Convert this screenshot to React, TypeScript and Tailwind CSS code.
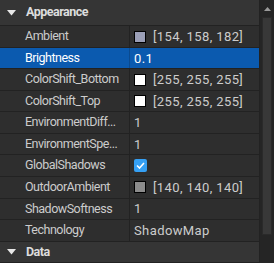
import React from "react";

type Prop = {
  name: string;
  value: string;
  swatch?: string;
  check?: boolean;
  selected?: boolean;
};

const props: Prop[] = [
  { name: "Ambient", value: "[154, 158, 182]", swatch: "#9a9eb6" },
  { name: "Brightness", value: "0.1", selected: true },
  { name: "ColorShift_Bottom", value: "[255, 255, 255]", swatch: "#ffffff" },
  { name: "ColorShift_Top", value: "[255, 255, 255]", swatch: "#ffffff" },
  { name: "EnvironmentDiff...", value: "1" },
  { name: "EnvironmentSpe...", value: "1" },
  { name: "GlobalShadows", value: "", check: true },
  { name: "OutdoorAmbient", value: "[140, 140, 140]", swatch: "#8c8c8c" },
  { name: "ShadowSoftness", value: "1" },
  { name: "Technology", value: "ShadowMap" },
];

const Caret = () => (
  <svg width="9" height="6" viewBox="0 0 9 6" className="shrink-0">
    <path d="M0 0 H9 L4.5 5.5 Z" fill="#e8e8e8" />
  </svg>
);

const Row = ({ p }: { p: Prop }) => (
  <div
    className={`flex h-[22px] border-b border-[#222222] ${
      p.selected ? "bg-[#0b5aaf]" : "bg-[#2e2e2e]"
    }`}
  >
    <div
      className={`w-[130px] shrink-0 flex items-center pl-[25px] whitespace-nowrap overflow-hidden border-r text-[12.5px] tracking-[-0.5px] ${
        p.selected ? "border-[#0a4a8f] text-white" : "border-[#222222] text-[#cccccc]"
      }`}
    >
      {p.name}
    </div>
    <div
      className={`flex-1 flex items-center pl-[4px] gap-[7px] text-[13px] tracking-[0.4px] ${
        p.selected ? "text-white" : "text-[#cccccc]"
      }`}
    >
      {p.swatch && (
        <span
          className="w-[12px] h-[12px] border border-black shrink-0"
          style={{ background: p.swatch }}
        />
      )}
      {p.check ? (
        <span className="w-[13px] h-[13px] rounded-[2px] bg-[#35a0f4] flex items-center justify-center">
          <svg width="9" height="7" viewBox="0 0 9 7">
            <path d="M1 3.5 L3.5 6 L8 1" stroke="#fff" strokeWidth="1.6" fill="none" />
          </svg>
        </span>
      ) : (
        <span>{p.value}</span>
      )}
    </div>
  </div>
);

const Header = ({ title, h }: { title: string; h: string }) => (
  <div className={`flex items-center gap-[10px] pl-[7px] bg-[#353535] border-b border-[#222222] ${h}`}>
    <Caret />
    <span className="font-bold text-[#dddddd] text-[12.5px] tracking-[-0.5px]">{title}</span>
  </div>
);

export default function App() {
  return (
    <div
      className="w-[274px] h-[263px] flex overflow-hidden bg-[#2e2e2e] leading-none"
      style={{ fontFamily: "Roboto, 'Liberation Sans', sans-serif" }}
    >
      <div className="w-[259px] flex flex-col">
        <Header title="Appearance" h="h-[27px]" />
        {props.map((p) => (
          <Row key={p.name} p={p} />
        ))}
        <Header title="Data" h="h-[22px]" />
      </div>
      <div className="w-[15px] bg-[#252525] flex flex-col border-l border-[#222222]">
        <div className="h-[17px] flex items-center justify-center">
          <svg width="7" height="4" viewBox="0 0 7 4">
            <path d="M0 4 L3.5 0 L7 4 Z" fill="#9a9a9a" />
          </svg>
        </div>
        <div className="h-[218px] mx-[2px] bg-[#383838] border border-[#2a2a2a]" />
      </div>
    </div>
  );
}
